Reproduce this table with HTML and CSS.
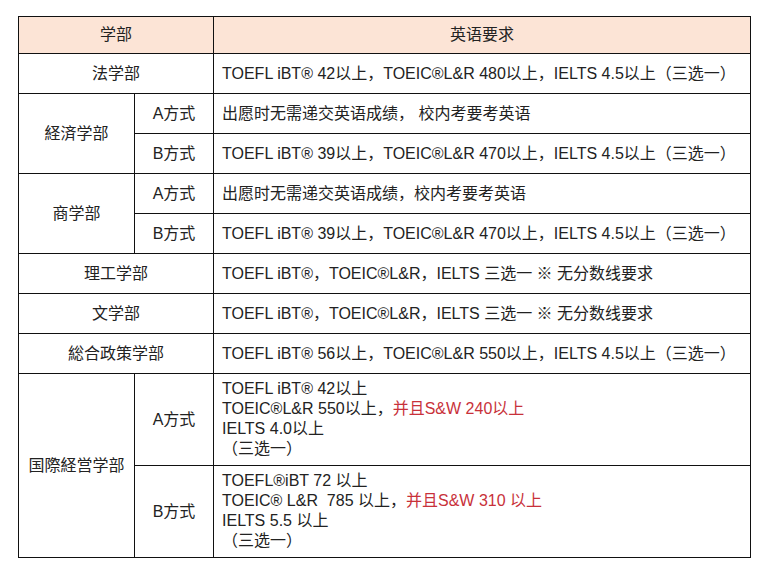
FILE: index.html
```html
<!DOCTYPE html>
<html lang="zh">
<head>
<meta charset="utf-8">
<link rel="stylesheet" href="styles.css">
</head>
<body>
<table class="req">
  <colgroup>
    <col class="c1">
    <col class="c2">
    <col class="c3">
  </colgroup>
  <tr class="head">
    <th colspan="2">学部</th>
    <th>英语要求</th>
  </tr>
  <tr>
    <td colspan="2" class="ctr">法学部</td>
    <td>TOEFL iBT® 42以上，TOEIC®L&amp;R 480以上，IELTS 4.5以上（三选一）</td>
  </tr>
  <tr>
    <td rowspan="2" class="ctr">経済学部</td>
    <td class="ctr">A方式</td>
    <td>出愿时无需递交英语成绩， 校内考要考英语</td>
  </tr>
  <tr>
    <td class="ctr">B方式</td>
    <td>TOEFL iBT® 39以上，TOEIC®L&amp;R 470以上，IELTS 4.5以上（三选一）</td>
  </tr>
  <tr>
    <td rowspan="2" class="ctr">商学部</td>
    <td class="ctr">A方式</td>
    <td>出愿时无需递交英语成绩，校内考要考英语</td>
  </tr>
  <tr>
    <td class="ctr">B方式</td>
    <td>TOEFL iBT® 39以上，TOEIC®L&amp;R 470以上，IELTS 4.5以上（三选一）</td>
  </tr>
  <tr>
    <td colspan="2" class="ctr">理工学部</td>
    <td>TOEFL iBT®，TOEIC®L&amp;R，IELTS 三选一 ※ 无分数线要求</td>
  </tr>
  <tr>
    <td colspan="2" class="ctr">文学部</td>
    <td>TOEFL iBT®，TOEIC®L&amp;R，IELTS 三选一 ※ 无分数线要求</td>
  </tr>
  <tr>
    <td colspan="2" class="ctr">総合政策学部</td>
    <td>TOEFL iBT® 56以上，TOEIC®L&amp;R 550以上，IELTS 4.5以上（三选一）</td>
  </tr>
  <tr class="tall">
    <td rowspan="2" class="ctr">国際経営学部</td>
    <td class="ctr">A方式</td>
    <td class="multi">
      <div class="ln">TOEFL iBT® 42以上</div>
      <div class="ln">TOEIC®L&amp;R 550以上，<span class="red">并且S&amp;W 240以上</span></div>
      <div class="ln">IELTS 4.0以上</div>
      <div class="ln">（三选一）</div>
    </td>
  </tr>
  <tr class="tall">
    <td class="ctr">B方式</td>
    <td class="multi">
      <div class="ln">TOEFL®iBT 72 以上</div>
      <div class="ln">TOEIC® L&amp;R&nbsp; 785 以上，<span class="red">并且S&amp;W 310 以上</span></div>
      <div class="ln">IELTS 5.5 以上</div>
      <div class="ln">（三选一）</div>
    </td>
  </tr>
</table>
</body>
</html>
```

FILE: styles.css
```css
html, body {
  margin: 0;
  padding: 0;
  background: #fff;
}
body {
  font-family: "Liberation Sans", "Noto Sans CJK SC", sans-serif;
  font-size: 16px;
  color: #222;
}
.req {
  border-collapse: collapse;
  table-layout: fixed;
  width: 732px;
  margin: 16px 0 0 18px;
}
.c1 { width: 116px; }
.c2 { width: 79px; }
.c3 { width: 537px; }
.req th, .req td {
  border: 1px solid #111;
  padding: 0 8px;
  height: 39px;
  line-height: 20px;
  font-weight: normal;
  text-align: left;
  vertical-align: middle;
  white-space: nowrap;
}
.req .head th {
  background: #fce4d6;
  text-align: center;
  height: 36px;
}
.req td.ctr {
  text-align: center;
}
.req .tall td {
  height: 91px;
}
.req td.multi {
  padding-top: 5px;
  padding-bottom: 6px;
  height: 80px;
}
.ln {
  height: 20px;
  line-height: 20px;
  overflow: visible;
}
.red {
  color: #c8313a;
}
```
